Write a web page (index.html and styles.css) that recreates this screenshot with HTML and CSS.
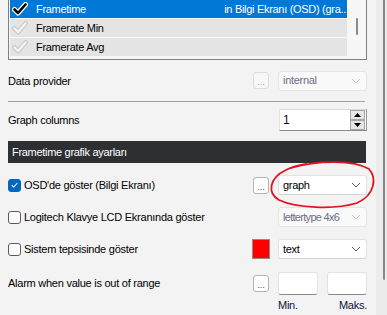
FILE: index.html
```html
<!DOCTYPE html>
<html>
<head>
<meta charset="utf-8">
<link rel="stylesheet" href="styles.css">
</head>
<body>
<div class="page">
  <div class="content">
    <div class="list">
      <div class="rows">
        <div class="row sel">
          <svg class="chk" width="16" height="14" viewBox="0 0 16 14"><path d="M2.5 7.5 L6 11 L13.5 2.5" fill="none" stroke="#fff" stroke-width="5" stroke-linecap="round" stroke-linejoin="round"/><path d="M2.5 7.5 L6 11 L13.5 2.5" fill="none" stroke="#000" stroke-width="2.6" stroke-linecap="round" stroke-linejoin="round"/></svg>
          <span class="name">Frametime</span>
          <span class="desc">in Bilgi Ekranı (OSD) (gra..</span>
        </div>
        <div class="row">
          <svg class="chk" width="16" height="14" viewBox="0 0 16 14"><path d="M2.5 7.5 L6 11 L13.5 2.5" fill="none" stroke="#c9c9c9" stroke-width="4.6" stroke-linecap="round" stroke-linejoin="round"/><path d="M2.5 7.5 L6 11 L13.5 2.5" fill="none" stroke="#f4f4f4" stroke-width="2.4" stroke-linecap="round" stroke-linejoin="round"/></svg>
          <span class="name">Framerate Min</span>
        </div>
        <div class="row">
          <svg class="chk" width="16" height="14" viewBox="0 0 16 14"><path d="M2.5 7.5 L6 11 L13.5 2.5" fill="none" stroke="#c9c9c9" stroke-width="4.6" stroke-linecap="round" stroke-linejoin="round"/><path d="M2.5 7.5 L6 11 L13.5 2.5" fill="none" stroke="#f4f4f4" stroke-width="2.4" stroke-linecap="round" stroke-linejoin="round"/></svg>
          <span class="name">Framerate Avg</span>
        </div>
      </div>
      <div class="vscroll"><div class="vthumb"></div></div>
    </div>

    <div class="field f-data">
      <span class="label">Data provider</span>
      <span class="btn dis">...</span>
      <span class="combo dis"><span class="val">internal</span><svg class="chev" width="10" height="6" viewBox="0 0 10 6"><path d="M1 1 L5 5 L9 1" fill="none" stroke="#c4c4c4" stroke-width="1"/></svg></span>
    </div>
    <div class="sep"></div>

    <div class="field f-graph">
      <span class="label">Graph columns</span>
      <span class="spin"><span class="val">1</span><span class="spinbtns"><span class="sb"><svg width="7" height="4" viewBox="0 0 7 4"><path d="M0 4 L3.5 0 L7 4 Z" fill="#000"/></svg></span><span class="sb"><svg width="7" height="4" viewBox="0 0 7 4"><path d="M0 0 L3.5 4 L7 0 Z" fill="#000"/></svg></span></span></span>
    </div>

    <div class="header">Frametime grafik ayarları</div>

    <div class="field f-osd">
      <span class="cb on"><svg width="12" height="12" viewBox="0 0 12 12"><path d="M3 6.2 L5.1 8.3 L9.2 3.8" fill="none" stroke="#fff" stroke-width="1.1"/></svg></span>
      <span class="label">OSD'de göster (Bilgi Ekranı)</span>
      <span class="btn">...</span>
      <span class="combo"><span class="val">graph</span><svg class="chev" width="10" height="6" viewBox="0 0 10 6"><path d="M1 1 L5 5 L9 1" fill="none" stroke="#555" stroke-width="1"/></svg></span>
    </div>

    <div class="field f-lcd">
      <span class="cb"></span>
      <span class="label">Logitech Klavye LCD Ekranında göster</span>
      <span class="combo dis"><span class="val tight">lettertype 4x6</span><svg class="chev" width="10" height="6" viewBox="0 0 10 6"><path d="M1 1 L5 5 L9 1" fill="none" stroke="#c4c4c4" stroke-width="1"/></svg></span>
    </div>

    <div class="field f-tray">
      <span class="cb"></span>
      <span class="label">Sistem tepsisinde göster</span>
      <span class="swatch"></span>
      <span class="combo"><span class="val">text</span><svg class="chev" width="10" height="6" viewBox="0 0 10 6"><path d="M1 1 L5 5 L9 1" fill="none" stroke="#555" stroke-width="1"/></svg></span>
    </div>

    <div class="field f-alarm">
      <span class="label">Alarm when value is out of range</span>
      <span class="btn">...</span>
      <span class="tb"></span>
      <span class="tb tb2"></span>
    </div>

    <div class="minmax">
      <span class="mm">Min.</span>
      <span class="mm mm-r">Maks.</span>
    </div>
  </div>
  <div class="pscroll"><div class="pthumb"></div></div>
  <svg class="annot" width="387" height="315" viewBox="0 0 387 315"><path d="M291 168 C318 160 354 160 369 169 C377 178 375 195 357 203 C334 210 296 208 279 200 C267 193 269 178 286 170 C293 166 300 165 306 164" fill="none" stroke="#e0141e" stroke-width="1.8" stroke-linecap="round"/></svg>
</div>
</body>
</html>
```

FILE: styles.css
```css
* { box-sizing: border-box; }
html, body { margin: 0; padding: 0; }
body {
  width: 387px;
  height: 315px;
  overflow: hidden;
  background: #f3f3f3;
  font-family: "Liberation Sans", Arial, sans-serif;
  font-size: 11px;
  letter-spacing: -0.25px;
  color: #000;
}
.page {
  position: relative;
  display: flex;
  width: 387px;
  height: 315px;
}
.content {
  width: 376px;
  padding-left: 8px;
  padding-right: 9px;
  display: flex;
  flex-direction: column;
}
.list {
  display: flex;
  height: 60px;
  border: 1px solid #7f7f7f;
  border-top: none;
  background: #f7f7f7;
  padding-left: 1px;
}
.rows {
  width: 337px;
  display: flex;
  flex-direction: column;
  gap: 1px;
}
.row {
  height: 18px;
  display: flex;
  align-items: center;
  background: #e4e4e4;
  letter-spacing: -0.3px;
}
.row.sel { background: #0078d7; color: #fff; }
.chk { margin-left: 2px; margin-right: 8px; flex: none; }
.name { flex: none; }
.desc { margin-left: auto; padding-right: 1px; letter-spacing: -0.3px; }
.vscroll {
  width: 19px;
  position: relative;
  display: flex;
  justify-content: center;
  padding-top: 18px;
}
.vthumb { width: 2px; height: 17px; background: #8a8a8a; border-radius: 1px; }

.field {
  display: flex;
  align-items: center;
}
.label { flex: 1; white-space: nowrap; }
.f-data { height: 41px; }
.sep { height: 1px; background: #a0a0a0; margin-right: 2px; }
.f-graph { height: 39px; padding-bottom: 3px; }
.f-osd { height: 44px; }
.f-lcd { height: 20px; }
.f-tray { height: 44px; }
.f-alarm { height: 24px; }

.btn {
  width: 16px;
  height: 17px;
  flex: none;
  margin-right: 9px;
  border: 1px solid #b4b4b4;
  border-radius: 3px;
  background: #fdfdfd;
  color: #444;
  font-size: 9px;
  letter-spacing: 0;
  line-height: 19px;
  text-align: center;
}
.btn.dis { border-color: #dcdcdc; color: #9a9a9a; background: #f7f7f7; }

.combo {
  width: 89px;
  height: 20px;
  flex: none;
  display: flex;
  align-items: center;
  justify-content: space-between;
  padding: 0 5px 0 4px;
  border: 1px solid #e2e2e2;
  border-bottom-color: #d2d2d2;
  border-radius: 3px;
  background: #fff;
  font-size: 11px;
  letter-spacing: -0.3px;
  white-space: nowrap;
  overflow: hidden;
}
.combo .val { padding-bottom: 1px; min-width: 0; }
.combo .val.tight { letter-spacing: -0.7px; }
.chev { flex: none; }
.combo.dis { background: #f9f9f9; border-color: #e5e5e5; color: #6e6e86; }

.spin {
  width: 88px;
  height: 22px;
  flex: none;
  display: flex;
  align-items: center;
  justify-content: space-between;
  background: #fff;
  border-top: 1px solid #d9d9d9;
  border-left: 1px solid #e4e4e4;
  border-bottom: 1px solid #8a8a8a;
  border-right: 1px solid #9a9a9a;
  padding-left: 3px;
  padding-right: 1px;
  color: #14003c;
  font-size: 12px;
}
.spinbtns { display: flex; flex-direction: column; gap: 0; }
.sb {
  width: 15px;
  height: 10px;
  display: flex;
  align-items: center;
  justify-content: center;
  background: #e6e6e6;
  border: 1px solid #a7a7a7;
}

.header {
  height: 22px;
  background: #2d2f33;
  color: #fff;
  padding-left: 4px;
  line-height: 22px;
  letter-spacing: -0.3px;
  margin-right: 1px;
}

.cb {
  width: 13px;
  height: 13px;
  flex: none;
  margin-right: 3px;
  border: 1px solid #5a5a5a;
  border-radius: 3px;
  background: #fcfcfc;
  display: flex;
  align-items: center;
  justify-content: center;
}
.cb.on { background: #0067c0; border-color: #0067c0; }

.swatch {
  width: 18px;
  height: 20px;
  flex: none;
  margin-right: 8px;
  background: #ff0000;
  border: 1px solid #8c8c8c;
}

.tb {
  width: 40px;
  height: 23px;
  flex: none;
  background: #fff;
  border: 1px solid #e3e3e3;
  border-bottom: 1px solid #8a8a8a;
  border-radius: 3px;
}
.tb2 { margin-left: 9px; }

.minmax {
  height: 20px;
  display: flex;
  justify-content: flex-end;
  align-items: center;
  gap: 9px;
  color: #10103a;
}
.mm { width: 40px; }
.mm-r { text-align: right; }

.pscroll {
  width: 11px;
  background: #ececec;
  display: flex;
  justify-content: flex-end;
  padding-right: 2px;
}
.pthumb { width: 2px; height: 280px; background: #888; border-radius: 0 0 1px 1px; }

.annot { position: absolute; left: 0; top: 0; pointer-events: none; }
```
